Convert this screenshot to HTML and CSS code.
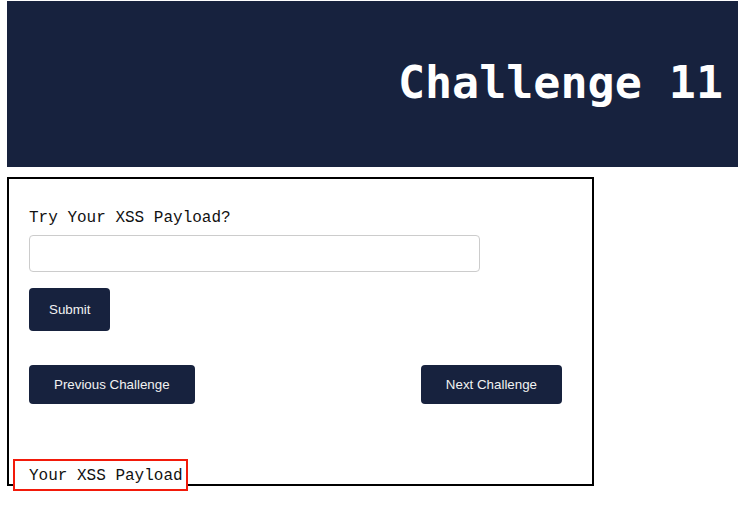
FILE: index.html
```html
<!DOCTYPE html>
<html>
<head>
  <title>Challenge 11</title>
  <link rel="stylesheet" href="styles.css">
</head>
<body>
  <div class="header">
    <h1>Challenge 11</h1>
  </div>

  <div class="challenge-box">
    <form class="payload-form" onsubmit="return false;">
      <label for="payload">Try Your XSS Payload?</label>
      <input type="text" id="payload" name="payload">
      <button type="submit" class="btn btn-submit">Submit</button>
    </form>

    <div class="nav-buttons">
      <button class="btn btn-nav">Previous Challenge</button>
      <button class="btn btn-nav">Next Challenge</button>
    </div>

    <div class="result">Your XSS Payload</div>
  </div>
</body>
</html>
```

FILE: styles.css
```css
body {
  margin: 0;
  padding-bottom: 20px;
  background-color: white;
  font-family: "Liberation Mono", monospace;
}
.header {
  margin: 1px 0 0 7px;
  height: 166px;
  box-sizing: border-box;
  background-color: #17223e;
  display: flex;
  align-items: center;
  justify-content: flex-end;
  padding: 0 15px 4px 0;
}
.header h1 {
  margin: 0;
  color: white;
  font-family: "DejaVu Sans Mono", monospace;
  font-size: 45px;
  font-weight: bold;
}
.challenge-box {
  box-sizing: border-box;
  width: 587px;
  margin: 10px 0 20px 7px;
  border: 2px solid black;
  padding: 30px 20px 0 20px;
}
.payload-form label {
  display: block;
  font-size: 16px;
  color: #111;
  line-height: 19px;
  margin-bottom: 7px;
}
.payload-form input {
  display: block;
  box-sizing: border-box;
  width: 451px;
  height: 37px;
  border: 1px solid #ccc;
  border-radius: 4px;
  margin: 0;
}
.btn {
  display: block;
  border: none;
  border-radius: 4px;
  background-color: #17223e;
  color: #f2f2f2;
  font-family: "Liberation Sans", Arial, sans-serif;
  font-size: 13.33px;
  line-height: 15px;
  cursor: pointer;
}
.btn-submit {
  margin-top: 16px;
  padding: 14px 20px;
}
.nav-buttons {
  display: flex;
  justify-content: space-between;
  margin: 34px 10px 0 0;
}
.btn-nav {
  padding: 12px 25px;
}
/* result box sits over the bottom border of the card */
.result {
  position: relative;
  width: fit-content;
  margin: 55px 0 -7px -16px;
  padding: 6px 3px 4px 14px;
  border: 2px solid #f21a0a;
  background-color: white;
  font-size: 16px;
  line-height: 18px;
  color: #111;
}
```
